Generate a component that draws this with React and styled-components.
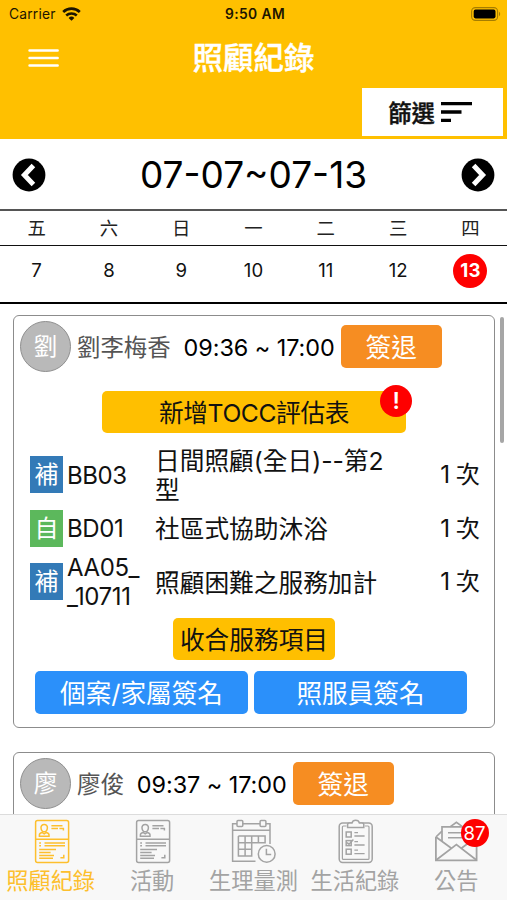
import React from 'react';
import styled, { createGlobalStyle } from 'styled-components';

const GlobalStyle = createGlobalStyle`
  * {
    box-sizing: border-box;
  }
  body {
    margin: 0;
    background: #fff;
    font-family: Inter, 'Noto Sans CJK TC', sans-serif;
    overflow: hidden;
  }
  button {
    font-family: inherit;
    border: none;
    padding: 0;
    margin: 0;
    white-space: nowrap;
  }
  svg {
    display: block;
  }
`;

const Screen = styled.div`
  width: 507px;
  height: 900px;
  display: flex;
  flex-direction: column;
  overflow: hidden;
`;

const Header = styled.header`
  height: 139px;
  margin-bottom: 1px;
  flex: none;
  background: #ffc000;
  display: flex;
  flex-direction: column;
`;

const StatusBar = styled.div`
  height: 28px;
  padding: 0 6px 1px 9px;
  display: grid;
  grid-template-columns: 1fr auto 1fr;
  align-items: center;
  font-size: 13.8px;
  color: #1c1500;
`;

const Carrier = styled.div`
  display: flex;
  align-items: center;
  gap: 6px;
  letter-spacing: 0.2px;
`;

const Clock = styled.div`
  font-weight: 600;
  font-size: 13.8px;
  letter-spacing: 0.4px;
`;

const BatterySlot = styled.div`
  display: flex;
  justify-content: flex-end;
`;

const NavBar = styled.div`
  height: 60px;
  padding: 0 28px;
  display: grid;
  grid-template-columns: 1fr auto 1fr;
  align-items: center;
`;

const Title = styled.h1`
  margin: 0;
  font-size: 30.5px;
  line-height: 60px;
  font-weight: 500;
  -webkit-text-stroke: 0.4px #fff;
  color: #fff;
`;

const FilterRow = styled.div`
  display: flex;
  justify-content: flex-end;
  padding-right: 4px;
`;

const FilterButton = styled.button`
  width: 141px;
  height: 48px;
  padding-right: 5px;
  background: #fff;
  color: #111;
  font-size: 23.3px;
  font-weight: 500;
  -webkit-text-stroke: 0.4px #111;
  display: flex;
  align-items: center;
  justify-content: center;
  gap: 6px;
`;

const WeekBar = styled.div`
  height: 69px;
  flex: none;
  padding: 0 12px;
  display: flex;
  align-items: center;
  justify-content: space-between;
`;

const Range = styled.div`
  font-size: 37px;
  line-height: 68px;
  color: #000;
`;

const Week = styled.div`
  flex: none;
  height: ${(props) => props.height};
  border-top: ${(props) => props.line};
  padding: ${(props) => props.pad || '0'};
  display: grid;
  grid-template-columns: repeat(7, 72.3px);
  justify-content: center;
  align-items: center;
  justify-items: center;
  font-size: 18.4px;
  color: #222;
`;

const Day = styled.span`
  width: 34px;
  height: 34px;
  border-radius: 50%;
  line-height: 33px;
  text-align: center;
  font-size: 18.6px;
  font-weight: ${(props) => (props.$active ? 700 : 400)};
  color: ${(props) => (props.$active ? '#fff' : '#111')};
  background: ${(props) => (props.$active ? '#fe0000' : 'transparent')};
`;

const Main = styled.main`
  flex: 1;
  min-height: 0;
  border-top: 2px solid #000;
  padding: 11px 3px 0 13px;
  display: flex;
  justify-content: space-between;
  overflow: hidden;
`;

const List = styled.div`
  width: 482px;
  display: flex;
  flex-direction: column;
  gap: 24px;
`;

const ScrollThumb = styled.div`
  width: 4px;
  height: 126px;
  margin-top: 2px;
  border-radius: 2px;
  background: #a6a6a6;
`;

const Card = styled.section`
  flex: none;
  height: 413px;
  border: 1.5px solid #8c8c8c;
  border-radius: 6px;
  padding: 5px 6px 0;
`;

const CardHead = styled.div`
  height: 51px;
  display: flex;
  align-items: center;
`;

const Avatar = styled.div`
  width: 51px;
  height: 51px;
  flex: none;
  border-radius: 50%;
  border: 1.5px solid #8f8f8f;
  background: #b9b9b9;
  color: #fff;
  font-size: 23.5px;
  line-height: 50px;
  text-align: center;
`;

const Name = styled.div`
  margin-left: 6px;
  padding-top: 2px;
  font-size: 23.4px;
  line-height: 49px;
  color: #555;
  white-space: nowrap;
`;

const Time = styled.div`
  margin: 1px 6px 0 13px;
  font-size: 23.4px;
  letter-spacing: -0.05px;
  white-space: nowrap;
  color: #000;
`;

const SignOut = styled.button`
  width: 101px;
  height: 43px;
  border-radius: 5px;
  background: #f68d22;
  color: #fff;
  font-size: 25.7px;
  line-height: 45px;
`;

const Centered = styled.div`
  display: flex;
  justify-content: center;
  margin-top: ${(props) => props.top};
  gap: 6px;
`;

const SignRow = styled.div`
  display: flex;
  gap: 6px;
  margin-top: 11px;
  padding-left: 15px;
`;

const YellowButton = styled.button`
  position: relative;
  width: ${(props) => props.width};
  height: 42px;
  border-radius: 5px;
  background: #ffbf00;
  color: #111;
  font-size: 24.7px;
  line-height: 44px;
  letter-spacing: ${(props) => props.$spacing || '0'};
`;

const Alert = styled.span`
  position: absolute;
  top: -6px;
  right: -6px;
  width: 32px;
  height: 32px;
  border-radius: 50%;
  background: #fe0000;
  color: #fff;
  font-size: 23px;
  font-weight: 600;
  line-height: 33px;
`;

const Services = styled.div`
  margin-top: 15px;
  padding: 0 8px 0 10px;
`;

const Service = styled.div`
  height: 53.6px;
  display: grid;
  grid-template-columns: 33px 84px 240px 1fr;
  grid-template-rows: 53.6px;
  column-gap: 4px;
  align-items: center;
  font-size: 24.7px;
  line-height: 28.5px;
  color: #111;
`;

const Tag = styled.span`
  height: 37px;
  line-height: 37px;
  text-align: center;
  font-size: 24px;
  color: #fff;
  background: ${(props) => (props.$self ? '#5cb85c' : '#337ab7')};
`;

const Code = styled.span`
  padding-top: 2px;
  white-space: pre-line;
  font-size: 24px;
  letter-spacing: -0.4px;
`;

const ServiceName = styled.span`
  padding-top: 2px;
`;

const Count = styled.span`
  padding-top: 1px;
  text-align: right;
  font-size: 24.2px;
  word-spacing: -1px;
`;

const BlueButton = styled.button`
  width: 213px;
  height: 43px;
  border-radius: 5px;
  background: #2b90fa;
  color: #fff;
  font-size: 25.6px;
  line-height: 45px;
`;

const TabBar = styled.nav`
  flex: none;
  height: 86px;
  border-top: 1px solid #dcdcdc;
  background: #f8f8f8;
  display: grid;
  grid-template-columns: repeat(5, 1fr);
`;

const Tab = styled.div`
  position: relative;
  display: flex;
  flex-direction: column;
  align-items: center;
  padding-top: 2px;
  font-size: 22.2px;
  line-height: 32px;
  white-space: nowrap;
  color: ${(props) => (props.$active ? '#fdbf2d' : '#a3a3a3')};
`;

const Badge = styled.span`
  position: absolute;
  top: 4px;
  left: 55px;
  width: 28px;
  height: 28px;
  border-radius: 50%;
  background: #fe0000;
  color: #fff;
  font-size: 18.6px;
  line-height: 28px;
  text-align: center;
`;

const WifiIcon = () => (
  <svg width="19" height="14" viewBox="0 0 19 14" fill="none" stroke="#1c1500">
    <path d="M1.2 5A12 12 0 0 1 17.8 5" strokeWidth="2.7" />
    <path d="M4.2 8.5A7.8 7.8 0 0 1 14.8 8.5" strokeWidth="2.5" />
    <path d="M9.5 13.8L6.6 10.9A4.2 4.2 0 0 1 12.4 10.9Z" fill="#1c1500" stroke="none" />
  </svg>
);

const BatteryIcon = () => (
  <svg width="30" height="14" viewBox="0 0 30 14">
    <rect x="0.6" y="0.6" width="26" height="12.8" rx="3.8" fill="none" stroke="#a67d00" strokeWidth="1.1" />
    <rect x="2.7" y="2.6" width="21.8" height="8.8" rx="1.8" fill="#000" />
    <path d="M28 4.8a2.6 2.6 0 0 1 0 4.4z" fill="#a67d00" />
  </svg>
);

const MenuIcon = () => (
  <svg width="32" height="20" viewBox="0 0 32 20" stroke="#fff" strokeWidth="2.6" strokeLinecap="round">
    <path d="M1.6 2.5H29.6M1.6 10H29.6M1.6 17.5H29.6" />
  </svg>
);

const SortIcon = () => (
  <svg width="31" height="22" viewBox="0 0 31 22" stroke="#000" strokeWidth="3.4">
    <path d="M0 2.6H31M0 11H20.5M0 19.4H10" />
  </svg>
);

const ArrowIcon = ({ flip }) => (
  <svg width="34" height="34" viewBox="0 0 34 34">
    <circle cx="17" cy="17" r="16.4" fill="#000" />
    <path
      d={flip ? 'M12.6 7.6L21.6 17L12.6 26.4' : 'M21.4 7.6L12.4 17L21.4 26.4'}
      fill="none"
      stroke="#fff"
      strokeWidth="5"
    />
  </svg>
);

const IconBase = ({ children }) => (
  <svg width="48" height="48" viewBox="0 0 48 48" fill="none" stroke="currentColor" strokeWidth="1.5">
    {children}
  </svg>
);

const RecordIcon = () => (
  <IconBase>
    <rect x="8.6" y="3.4" width="33" height="42" rx="2" />
    <path d="M8.6 22.2H41.6" />
    <path d="M17.2 7.4C19.4 7.4 20.6 9 20.4 11C20.2 13.2 18.8 14.8 17.2 14.8C15.6 14.8 14.2 13.2 14 11C13.8 9 15 7.4 17.2 7.4Z" />
    <path d="M12.4 19.3V17.8Q12.4 16 15 15.4L17.2 16.8L19.4 15.4Q22 16 22 17.8V19.3Z" />
    <path d="M24.4 8.8H35.5M24.4 11.6H31M32.4 11.4H37M36.4 11V13.4" />
    <path d="M12.2 26H14M12.2 28.8H14M17.5 26H38M17.5 28.8H38" />
    <path d="M12.2 32.6H29M12.2 35.6H23.6M12.2 38.4H27M12.2 41.2H26M33.4 40.8H36.8V37.8" />
  </IconBase>
);

const CalendarIcon = () => (
  <IconBase>
    <path d="M8 6.7H3.6V44.3H26.5M13.8 6.7H31M37 6.7H41V27M3.6 13.3H41" />
    <rect x="8" y="3.6" width="5.8" height="6" rx="1" />
    <rect x="31.1" y="3.6" width="5.8" height="6" rx="1" />
    <path d="M9.4 19H36.1V25.7H9.4M9.4 19V39H22.7V19M9.4 32.3H22.7M16.1 19V39M29.4 19V25.7" />
    <circle cx="37.7" cy="36.9" r="8.4" />
    <path d="M37.4 31.8V37.4H42.2" />
  </IconBase>
);

const ClipboardIcon = () => (
  <IconBase>
    <rect x="8.2" y="6" width="33" height="39.4" rx="3.4" />
    <path
      d="M15.5 9H12.4Q11.4 9 11.4 10V41.4Q11.4 42.4 12.4 42.4H37Q38 42.4 38 41.4V10Q38 9 37 9H34"
      strokeWidth="1.2"
    />
    <path
      d="M16.6 10.6V7.6Q16.6 6 18.4 6H21Q21.6 3.2 24.7 3.2Q27.8 3.2 28.4 6H31Q32.8 6 32.8 7.6V10.6Z"
      fill="#f8f8f8"
    />
    <rect x="15.2" y="15" width="5" height="5" />
    <rect x="15.2" y="23.6" width="5" height="5" />
    <rect x="15.2" y="32.2" width="5" height="5" />
    <path d="M16 25.6L18 27.2L22.4 22.6" />
    <path d="M23.4 15.6H27M23.4 19H33.6M23.4 24.6H27M23.4 28H33.6M23.4 33.2H27M23.4 36.6H33.6" strokeWidth="1.3" />
  </IconBase>
);

const MailIcon = () => (
  <IconBase>
    <path d="M3.9 20V43.4H44.6V20" strokeWidth="1.8" />
    <path d="M4.2 43L24.4 27.6L44.4 43M4 20L19.4 31.2M44.6 20L29.4 31.2" strokeWidth="1.7" />
    <path d="M3.9 20L10 14.2M18.4 9.6L24.4 5.4L30.4 9.6M38.6 14.2L44.6 20" strokeWidth="1.7" />
    <path d="M10 24V9.8H38.6V24" strokeWidth="1.7" />
    <path d="M16 15.8H30M16 20.8H32" />
  </IconBase>
);

const weekdays = ['五', '六', '日', '一', '二', '三', '四'];
const dates = [7, 8, 9, 10, 11, 12, 13];

const services = [
  { tag: '補', code: 'BB03', name: '日間照顧(全日)--第2型' },
  { tag: '自', code: 'BD01', name: '社區式協助沐浴' },
  { tag: '補', code: 'AA05_\n_10711', name: '照顧困難之服務加計' },
];

const tabs = [
  { label: '照顧紀錄', Icon: RecordIcon, active: true },
  { label: '活動', Icon: RecordIcon },
  { label: '生理量測', Icon: CalendarIcon },
  { label: '生活紀錄', Icon: ClipboardIcon },
  { label: '公告', Icon: MailIcon, badge: 87 },
];

function PersonHead({ name, time }) {
  return (
    <CardHead>
      <Avatar>{name[0]}</Avatar>
      <Name>{name}</Name>
      <Time>{time}</Time>
      <SignOut>簽退</SignOut>
    </CardHead>
  );
}

function App() {
  return (
    <Screen>
      <GlobalStyle />
      <Header>
        <StatusBar>
          <Carrier>
            Carrier
            <WifiIcon />
          </Carrier>
          <Clock>9:50 AM</Clock>
          <BatterySlot>
            <BatteryIcon />
          </BatterySlot>
        </StatusBar>
        <NavBar>
          <MenuIcon />
          <Title>照顧紀錄</Title>
        </NavBar>
        <FilterRow>
          <FilterButton>
            篩選
            <SortIcon />
          </FilterButton>
        </FilterRow>
      </Header>
      <WeekBar>
        <ArrowIcon />
        <Range>07-07~07-13</Range>
        <ArrowIcon flip />
      </WeekBar>
      <Week height="36px" line="2px solid #555" pad="0 0 2px">
        {weekdays.map((day) => (
          <span key={day}>{day}</span>
        ))}
      </Week>
      <Week height="57px" line="1px solid #111" pad="0 0 7px">
        {dates.map((date) => (
          <Day key={date} $active={date === 13}>
            {date}
          </Day>
        ))}
      </Week>
      <Main>
        <List>
          <Card>
            <PersonHead name="劉李梅香" time="09:36 ~ 17:00" />
            <Centered top="19px">
              <YellowButton width="304px" $spacing="-0.4px">
                新增TOCC評估表
                <Alert>!</Alert>
              </YellowButton>
            </Centered>
            <Services>
              {services.map((service) => (
                <Service key={service.code}>
                  <Tag $self={service.tag === '自'}>{service.tag}</Tag>
                  <Code>{service.code}</Code>
                  <ServiceName>{service.name}</ServiceName>
                  <Count>1 次</Count>
                </Service>
              ))}
            </Services>
            <Centered top="9px">
              <YellowButton width="162px">收合服務項目</YellowButton>
            </Centered>
            <SignRow>
              <BlueButton>個案/家屬簽名</BlueButton>
              <BlueButton>照服員簽名</BlueButton>
            </SignRow>
          </Card>
          <Card>
            <PersonHead name="廖俊" time="09:37 ~ 17:00" />
          </Card>
        </List>
        <ScrollThumb />
      </Main>
      <TabBar>
        {tabs.map(({ label, Icon, active, badge }) => (
          <Tab key={label} $active={active}>
            <Icon />
            {label}
            {badge && <Badge>{badge}</Badge>}
          </Tab>
        ))}
      </TabBar>
    </Screen>
  );
}

export default App;
